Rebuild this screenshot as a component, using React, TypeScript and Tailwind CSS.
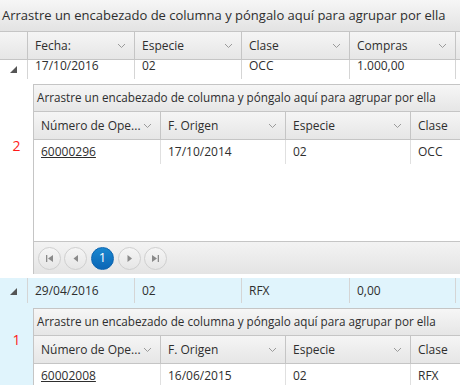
import React from 'react';

const font = { fontFamily: '"Open Sans", "Noto Sans", sans-serif' };

function Chevron() {
  return (
    <svg width="9" height="6" viewBox="0 0 9 6" className="shrink-0">
      <path d="M1 1l3.5 3.5L8 1" fill="none" stroke="#9a9a9a" strokeWidth="1" />
    </svg>
  );
}

function Expand() {
  return (
    <svg width="7" height="7" viewBox="0 0 7 7">
      <path d="M7 0v7H0z" fill="#555" />
    </svg>
  );
}

function HeaderCell({ label, w, last }: { label: string; w: string; last?: boolean }) {
  return (
    <div className={`${w} flex shrink-0 items-center justify-between border-l border-[#c5c5c5] pl-[7px] pr-[8px]`}>
      <span className="truncate">{label}</span>
      {!last && <Chevron />}
    </div>
  );
}

function PagerBtn({ children, active }: { children: React.ReactNode; active?: boolean }) {
  return (
    <div
      className={`flex h-[23px] w-[23px] items-center justify-center rounded-full border text-[13px] ${
        active
          ? 'border-[#0c64b0] bg-gradient-to-b from-[#1a87cf] to-[#0b66b6] text-white'
          : 'border-[#cfcfcf] bg-gradient-to-b from-[#f5f5f5] to-[#e6e6e6]'
      }`}
    >
      {children}
    </div>
  );
}

function Icon({ d }: { d: string }) {
  return (
    <svg width="9" height="9" viewBox="0 0 9 9">
      <path d={d} fill="#8a8a8a" />
    </svg>
  );
}

function Detail({ num, fecha, clase, pager }: { num: string; fecha: string; clase: string; pager?: boolean }) {
  return (
    <div className="flex-1 border-l border-t border-[#c5c5c5] bg-white text-[12px] text-[#2e2e2e]">
      <div className="flex h-[27px] items-center border-b border-[#c5c5c5] bg-gradient-to-b from-[#f6f6f6] to-[#e6e6e6] pl-[3px] text-[11.7px] whitespace-nowrap">
        Arrastre un encabezado de columna y póngalo aquí para agrupar por ella
      </div>
      <div className="flex h-[28px] border-b border-[#c5c5c5] bg-gradient-to-b from-[#f5f5f5] to-[#e6e6e6]">
        <div className="flex w-[126px] shrink-0 items-center justify-between pl-[7px] pr-[8px]">
          <span>Número de Ope...</span>
          <Chevron />
        </div>
        <HeaderCell label="F. Origen" w="w-[125px]" />
        <HeaderCell label="Especie" w="w-[125px]" />
        <HeaderCell label="Clase" w="w-[60px]" last />
      </div>
      <div className="flex h-[24px] items-center">
        <div className="w-[126px] shrink-0 pl-[7px]">
          <span className="underline">{num}</span>
        </div>
        <div className="flex h-full w-[125px] shrink-0 items-center border-l border-[#e0e0e0] pl-[7px]">{fecha}</div>
        <div className="flex h-full w-[125px] shrink-0 items-center border-l border-[#e0e0e0] pl-[7px]">02</div>
        <div className="flex h-full w-[60px] shrink-0 items-center border-l border-[#e0e0e0] pl-[7px]">{clase}</div>
      </div>
      {pager && (
        <>
          <div className="h-[77px]" />
          <div className="flex h-[33px] items-center gap-[3px] border-t border-[#c5c5c5] bg-gradient-to-b from-[#f3f3f3] to-[#e4e4e4] pl-[4px]">
            <PagerBtn><Icon d="M1 1h1.3v7H1zM8 1v7L3 4.5z" /></PagerBtn>
            <PagerBtn><Icon d="M7 1v7L2.5 4.5z" /></PagerBtn>
            <div className="ml-[1px] mr-[1px]"><PagerBtn active>1</PagerBtn></div>
            <PagerBtn><Icon d="M2.5 1v7L7 4.5z" /></PagerBtn>
            <PagerBtn><Icon d="M1 1v7l5-3.5zM6.7 1H8v7H6.7z" /></PagerBtn>
          </div>
        </>
      )}
    </div>
  );
}

function MasterCell({ children, w }: { children?: React.ReactNode; w: string }) {
  return <div className={`${w} flex h-full shrink-0 items-center border-l border-[#d5d5d5] pl-[7px]`}>{children}</div>;
}

export default function App() {
  return (
    <div className="h-[385px] w-[460px] overflow-hidden bg-white text-[12px] text-[#2e2e2e]" style={font}>
      <div className="flex h-[32px] items-center border-b border-[#c5c5c5] bg-gradient-to-b from-[#f6f6f6] to-[#e3e3e3] pl-[2px] text-[13px] whitespace-nowrap">
        Arrastre un encabezado de columna y póngalo aquí para agrupar por ella
      </div>
      <div className="flex h-[28px] border-b border-[#c5c5c5] bg-gradient-to-b from-[#f5f5f5] to-[#e6e6e6]">
        <div className="w-[27px] shrink-0" />
        <HeaderCell label="Fecha:" w="w-[107px]" />
        <HeaderCell label="Especie" w="w-[107px]" />
        <HeaderCell label="Clase" w="w-[108px]" />
        <HeaderCell label="Compras" w="w-[106px]" />
        <div className="w-[10px] shrink-0 border-l border-[#c5c5c5]" />
      </div>

      {/* row 1 (scrolled a few px) */}
      <div className="flex h-[19px] items-start">
        <div className="flex h-full w-[27px] shrink-0 justify-center pt-[6px]">
          <Expand />
        </div>
        <MasterCell w="w-[107px]"><span className="-mt-[7px]">17/10/2016</span></MasterCell>
        <MasterCell w="w-[107px]"><span className="-mt-[7px]">02</span></MasterCell>
        <MasterCell w="w-[108px]"><span className="-mt-[7px]">OCC</span></MasterCell>
        <MasterCell w="w-[106px]"><span className="-mt-[7px]">1.000,00</span></MasterCell>
        <MasterCell w="w-[10px]" />
      </div>
      <div className="flex pb-[4px] pt-[5px]">
        <div className="flex w-[33px] shrink-0 justify-center pt-[51px] text-[14px] text-[#ff1a1a]">2</div>
        <Detail num="60000296" fecha="17/10/2014" clase="OCC" pager />
      </div>

      {/* row 2 */}
      <div className="bg-[#e0f4fc]">
        <div className="flex h-[25px]">
          <div className="flex h-full w-[27px] shrink-0 items-center justify-center pt-[2px]">
            <Expand />
          </div>
          <MasterCell w="w-[107px]">29/04/2016</MasterCell>
          <MasterCell w="w-[107px]">02</MasterCell>
          <MasterCell w="w-[108px]">RFX</MasterCell>
          <MasterCell w="w-[106px]">0,00</MasterCell>
          <MasterCell w="w-[10px]" />
        </div>
        <div className="flex pt-[5px]">
          <div className="flex w-[33px] shrink-0 justify-center pt-[21px] text-[14px] text-[#ff1a1a]">1</div>
          <Detail num="60002008" fecha="16/06/2015" clase="RFX" />
        </div>
      </div>
    </div>
  );
}
